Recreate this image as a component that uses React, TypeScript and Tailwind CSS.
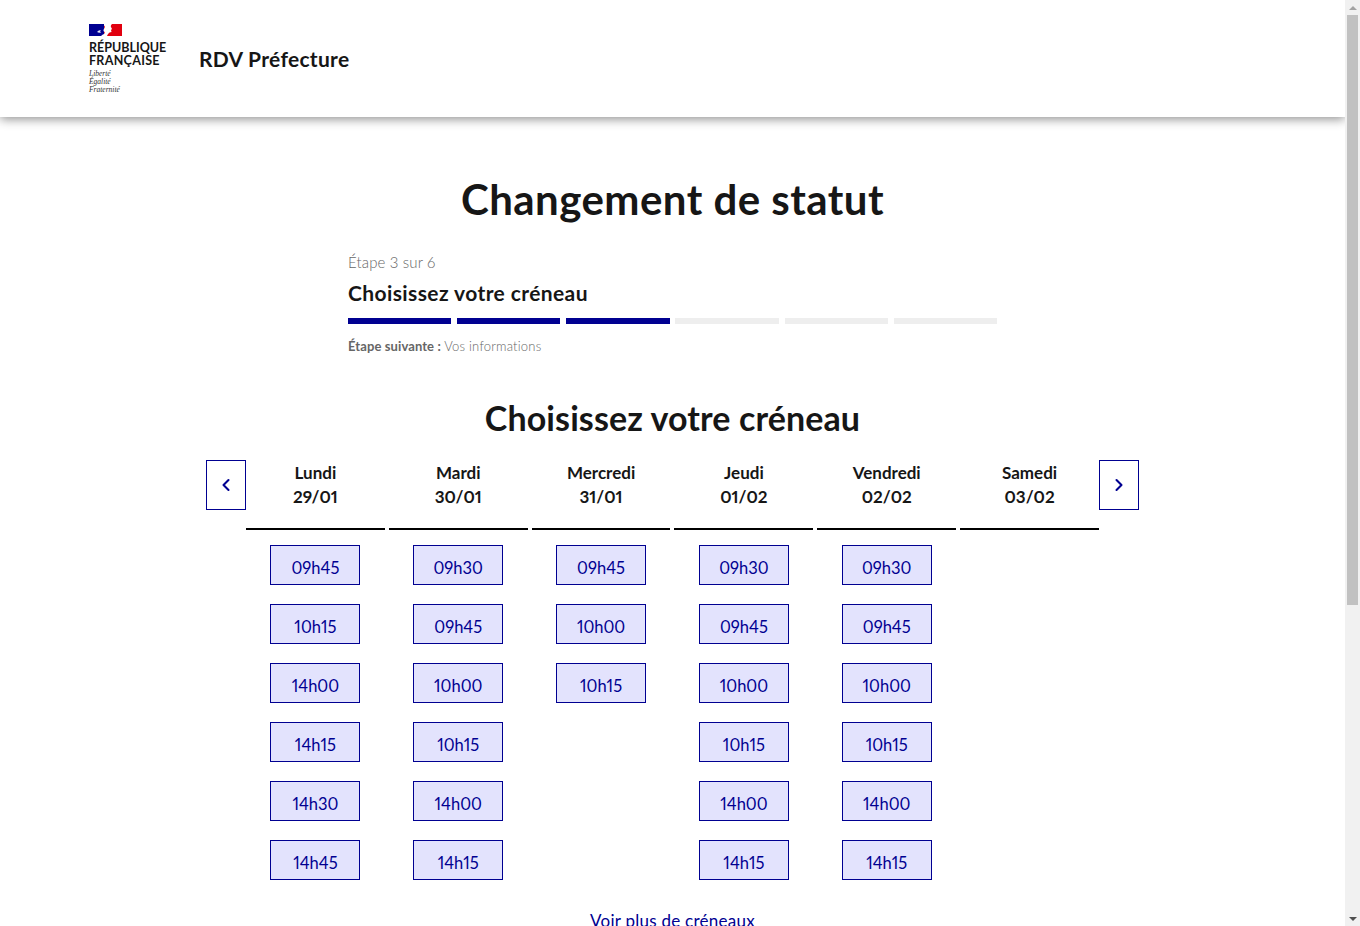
import React from 'react';
import { ChevronLeft, ChevronRight } from 'lucide-react';

const days = [
  { name: 'Lundi', date: '29/01', slots: ['09h45', '10h15', '14h00', '14h15', '14h30', '14h45'] },
  { name: 'Mardi', date: '30/01', slots: ['09h30', '09h45', '10h00', '10h15', '14h00', '14h15'] },
  { name: 'Mercredi', date: '31/01', slots: ['09h45', '10h00', '10h15'] },
  { name: 'Jeudi', date: '01/02', slots: ['09h30', '09h45', '10h00', '10h15', '14h00', '14h15'] },
  { name: 'Vendredi', date: '02/02', slots: ['09h30', '09h45', '10h00', '10h15', '14h00', '14h15'] },
  { name: 'Samedi', date: '03/02', slots: [] as string[] },
];

const steps = [true, true, true, false, false, false];

const Logo = () => (
  <div className="w-[78px]">
    <svg width="33" height="12" viewBox="0 0 33 12" className="block">
      <rect width="33" height="12" fill="#e1000f" />
      <rect width="15" height="12" fill="#000091" />
      <path d="M15 0h8c-1 1-1.500 2-1 3l1 2-1 1 .5 2-2 .5c-1 1-2 2-2.500 3.500h-6c1-1 2-1.500 3-2 1-1 1-2 0-2.500-1-.5-.5-2 .5-3.500.5-1 .5-2-.5-2.500z" fill="#fff" />
      <path d="M8 8c1-1.300 2.500-1.800 4-2l-1 1.300 1.200 1.200-2.200.2z" fill="#dfe3f5" />
    </svg>
    <div className="mt-[5px] text-[12.500px] leading-[13px] font-bold text-[#161616] font-['Lato',sans-serif]">
      <div>RÉPUBLIQUE</div>
      <div className="tracking-[0.3px]">FRANÇAISE</div>
    </div>
    <div className="mt-[3px] text-[7.500px] leading-[8px] italic text-[#333333] font-['Liberation_Serif',serif]">
      <div>Liberté</div>
      <div>Égalité</div>
      <div>Fraternité</div>
    </div>
  </div>
);

const NavButton = ({ children }: { children: React.ReactNode }) => (
  <button className="w-10 h-[50px] shrink-0 border border-[#000091] bg-white flex items-center justify-center text-[#000091]">
    {children}
  </button>
);

const App: React.FC = () => {
  return (
    <div className="h-[926px] overflow-hidden flex bg-white text-[#161616] font-['Lato',sans-serif] proportional-nums">
      <div className="w-[1345px] shrink-0">
        <header className="h-[117px] flex items-start pl-[89px] pt-[24px] bg-white shadow-[0_2px_10px_rgba(0,0,0,0.45)]">
          <Logo />
          <div className="ml-[32px] mt-[20px] text-[21px] leading-[30px] font-bold tracking-[0.3px]">RDV Préfecture</div>
        </header>

        <main>
          <h1 className="mt-[57px] text-center text-[42px] leading-[50px] font-bold tracking-[0.45px]">Changement de statut</h1>

          <div className="ml-[348px] w-[649px] mt-[26px]">
            <div className="text-[15px] leading-[24px] text-[#666666] font-light tracking-[0.15px]">Étape 3 sur 6</div>
            <div className="mt-[5px] text-[21px] leading-[28px] font-bold tracking-[0.4px]">Choisissez votre créneau</div>
            <div className="mt-[11px] flex justify-between">
              {steps.map((on, i) => (
                <div key={i} className={`w-[103.200px] h-[6px] ${on ? 'bg-[#000091]' : 'bg-[#eeeeee]'}`} />
              ))}
            </div>
            <div className="mt-[12px] text-[13px] leading-[20px] text-[#666666] tracking-[0.1px]">
              <span className="font-bold">Étape suivante :</span> <span className="font-light tracking-[0.2px]">Vos informations</span>
            </div>
          </div>

          <h2 className="mt-[42px] text-center text-[34px] leading-[40px] font-bold tracking-[0.1px]">Choisissez votre créneau</h2>

          <div className="ml-[206px] w-[933px] mt-[22px] flex items-start">
            <NavButton><ChevronLeft size={20} strokeWidth={2.5} /></NavButton>
            <div className="flex-1 grid grid-cols-6 gap-x-[4px]">
              {days.map((d) => (
                <div key={d.name} className="flex flex-col items-center">
                  <div className="w-full h-[70px] border-b-2 border-black pt-[1px] text-center text-[17px] leading-[24px] font-bold">
                    <div>{d.name}</div>
                    <div>{d.date}</div>
                  </div>
                  <div className="mt-[15px] flex flex-col gap-[19px]">
                    {d.slots.map((s) => (
                      <button key={s} className="w-[90px] h-10 border border-[#000091] bg-[#e3e3fd] text-[#000091] text-[16.500px] leading-[24px] font-normal pt-[6px]">
                        {s}
                      </button>
                    ))}
                  </div>
                </div>
              ))}
            </div>
            <NavButton><ChevronRight size={20} strokeWidth={2.5} /></NavButton>
          </div>

          <div className="mt-[29px] text-center">
            <a className="text-[#000091] text-[17px] leading-[24px] tracking-[0.25px] underline underline-offset-2">Voir plus de créneaux</a>
          </div>
        </main>
      </div>

      <div className="w-[15px] shrink-0 h-full bg-[#f1f1f1] flex flex-col items-center">
        <div className="h-[15px] flex items-center justify-center">
          <div className="w-0 h-0 border-x-[4px] border-x-transparent border-b-[4px] border-b-[#a3a3a3]" />
        </div>
        <div className="w-[11px] h-[590px] bg-[#c1c1c1]" />
        <div className="flex-1" />
        <div className="h-[15px] flex items-center justify-center">
          <div className="w-0 h-0 border-x-[4px] border-x-transparent border-t-[4px] border-t-[#505050]" />
        </div>
      </div>
    </div>
  );
};

export default App;
